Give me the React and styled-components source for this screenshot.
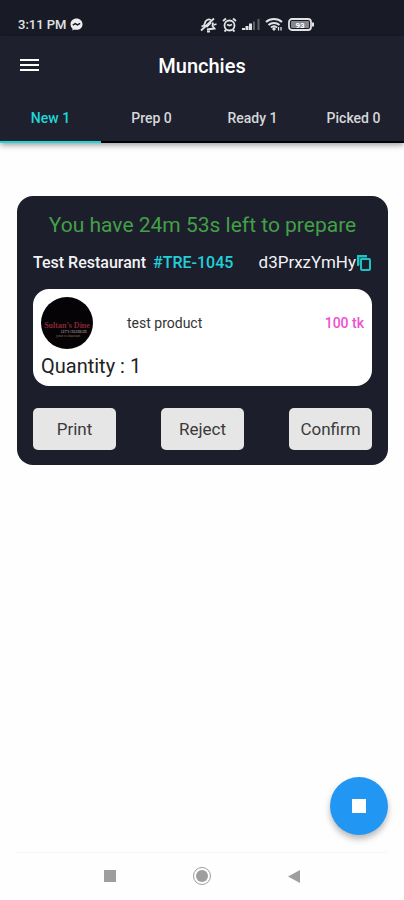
import React from 'react';
import styled, { createGlobalStyle } from 'styled-components';

const GlobalStyle = createGlobalStyle`
  * {
    box-sizing: border-box;
  }

  body {
    margin: 0;
    background: #fefefe;
    font-family: Roboto, "Liberation Sans", sans-serif;
  }

  button {
    border: 0;
    padding: 0;
    background: none;
    font-family: inherit;
    cursor: pointer;
  }
`;

const Screen = styled.div`
  display: flex;
  flex-direction: column;
  min-height: 100vh;
`;

const StatusBar = styled.div`
  display: grid;
  grid-template-columns: 1fr 1fr;
  align-items: center;
  height: 36px;
  padding: 13px 24px 0 18px;
  background: #181b25;
  color: #e2e3e6;
`;

const Clock = styled.div`
  display: flex;
  align-items: center;
  gap: 3px;
  font-size: 13px;
  line-height: 20px;
  font-weight: 500;
`;

const StatusIcons = styled.div`
  display: flex;
  align-items: center;
  gap: 5px;
`;

const Header = styled.header`
  background: #1e202d;
  box-shadow: 0 2px 6px rgba(0, 0, 0, 0.4);
`;

const TitleBar = styled.div`
  display: grid;
  grid-template-columns: 24px 1fr 24px;
  align-items: center;
  height: 58px;
  padding: 0 18px;
`;

const MenuButton = styled.button`
  display: flex;
  align-items: center;
  height: 40px;
  color: #fff;
`;

const Title = styled.h1`
  margin: 0;
  padding-top: 2px;
  text-align: center;
  color: #fff;
  font-size: 20px;
  line-height: 28px;
  font-weight: 500;
`;

const Tabs = styled.nav`
  display: grid;
  grid-template-columns: repeat(4, 1fr);
  box-shadow: inset 0 -2px 0 #020306;
`;

const Tab = styled.button`
  height: 49px;
  border-bottom: 2px solid ${props => props.$active ? '#20d5d5' : 'transparent'};
  color: ${props => props.$active ? '#20d5d5' : '#d6d7db'};
  font-size: 14px;
  line-height: 20px;
  font-weight: 500;
`;

const Content = styled.main`
  flex: 1;
  padding: 53px 16px 16px 17px;
`;

const Order = styled.section`
  padding: 16px 16px 15px;
  border-radius: 16px;
  background: #1c1e2c;
`;

const TimeLeft = styled.p`
  margin: 0;
  text-align: center;
  color: #43a047;
  font-size: 21px;
  line-height: 26px;
`;

const OrderInfo = styled.div`
  display: flex;
  justify-content: space-between;
  align-items: center;
  margin: 13px 0 15px;
  color: #f2f2f4;
  font-size: 16px;
  line-height: 23px;
`;

const Restaurant = styled.div`
  display: flex;
  gap: 7px;
  font-weight: 500;
`;

const OrderNumber = styled.span`
  color: #22d0d8;
`;

const OrderCode = styled.div`
  display: flex;
  align-items: center;
  font-size: 17px;
`;

const CopyButton = styled.button`
  display: flex;
  color: #1cc5c5;
`;

const Product = styled.div`
  padding: 8px;
  border-radius: 16px;
  background: #fff;
`;

const ProductRow = styled.div`
  display: flex;
  align-items: center;
  gap: 34px;
  color: #333;
  font-size: 14px;
  line-height: 20px;
`;

const Price = styled.span`
  margin-left: auto;
  color: #ee50cf;
  font-weight: 500;
`;

const Quantity = styled.p`
  margin: 5px 0 0;
  color: #222;
  font-size: 20px;
  line-height: 24px;
`;

const Actions = styled.div`
  display: flex;
  justify-content: space-between;
  margin-top: 22px;
`;

const Action = styled.button`
  width: 83px;
  height: 42px;
  border-radius: 5px;
  background: #e6e6e6;
  color: #3a3a3a;
  font-size: 17px;
  line-height: 24px;
`;

const StopButton = styled.button`
  position: fixed;
  right: 16px;
  bottom: 65px;
  display: flex;
  align-items: center;
  justify-content: center;
  width: 58px;
  height: 58px;
  border-radius: 50%;
  background: #2196f3;
  box-shadow: 0 4px 6px rgba(0, 0, 0, 0.28);
`;

const SystemNav = styled.nav`
  display: flex;
  justify-content: center;
  align-items: center;
  gap: 72px;
  height: 48px;
  margin: 0 16px;
  padding-bottom: 2px;
  border-top: 1px solid #f7f7f7;
`;

const NavButton = styled.button`
  display: flex;
  color: #9e9e9e;
`;

const TABS = ['New 1', 'Prep 0', 'Ready 1', 'Picked 0'];
const ACTIONS = ['Print', 'Reject', 'Confirm'];

const MessengerIcon = () => (
  <svg width="13" height="13" viewBox="0 0 13 13">
    <path d="M6.5.5C3 .5.5 3 .5 6.2c0 1.8.8 3.3 2 4.3v2l1.8-1c.7.2 1.4.3 2.2.3 3.5 0 6-2.5 6-5.6S10 .5 6.5.5z" fill="#eee" />
    <path d="M2.8 7.2L5.3 5.6l2.1 1.2 2.8-1.400" fill="none" stroke="#181b25" strokeWidth="1.5" />
  </svg>
);

const MutedIcon = () => (
  <svg width="18" height="16" viewBox="0 0 18 16" fill="none" stroke="currentColor" strokeWidth="1.8">
    <path d="M2.500 9.500L5 8.500 6.500 4.500C8 2.200 10 2 12 3M14 5.500l-.5 3.500 2 2.500L8 12.500" />
    <path d="M2 13.500L15 1.500M8 14.500h3M5 8.500l3 1 4-4" />
    <path d="M14.500 8l3-1" strokeWidth="1.500" />
  </svg>
);

const AlarmIcon = () => (
  <svg width="15" height="16" viewBox="0 0 15 16" fill="none" stroke="currentColor" strokeWidth="1.8">
    <circle cx="7.500" cy="8.500" r="5" />
    <path d="M1 4L4 1.500M14 4l-3-2.500M5 7.500l2.500 1L10 7.500M4 13l-1.500 1.500M11 13l1.500 1.500" />
  </svg>
);

const SignalIcon = () => (
  <svg width="18" height="13" viewBox="0 0 18 13" fill="currentColor">
    <path d="M0 10h3v2H0zM3.500 8H6.500v4H3.500zM7 5.500h3V12H7z" />
    <path d="M11 3.500h2V12h-2zM15.500 1h2v11h-2z" opacity="0.35" />
  </svg>
);

const WifiIcon = () => (
  <svg width="18" height="15" viewBox="0 0 18 15" fill="none" stroke="currentColor" strokeWidth="2">
    <path d="M1 5c4.500-4 11.500-4 16 0M3.500 8c3.200-2.800 7.800-2.800 11 0M6 10.500c1.800-1.500 4.200-1.500 6 0" />
    <path d="M9 10l2 2-2 2-2-2z" fill="currentColor" stroke="none" />
    <path d="M13.500 10v3.500M16 10v3.500" strokeWidth="1.300" />
  </svg>
);

const BatteryIcon = () => (
  <svg width="27" height="13" viewBox="0 0 27 13">
    <rect x="1" y="1" width="22" height="11" rx="3" fill="none" stroke="currentColor" strokeWidth="1.800" />
    <path d="M24 4.500h2v4h-2z" fill="currentColor" />
    <rect x="3" y="3" width="18" height="7" rx="1" fill="#85878e" />
    <text x="12" y="9.500" textAnchor="middle" fontSize="8" fontWeight="700" fill="#fff">93</text>
  </svg>
);

const MenuIcon = () => (
  <svg width="24" height="16" viewBox="0 0 24 16">
    <path d="M2 3h19M2 8h19M2 13h19" stroke="currentColor" strokeWidth="2" />
  </svg>
);

const CopyIcon = () => (
  <svg width="16" height="20" viewBox="0 0 16 20" fill="none" stroke="currentColor" strokeWidth="2">
    <path d="M2 13V3h9" />
    <path d="M3 4h8v2H5v6H3z" fill="currentColor" stroke="none" opacity="0.5" />
    <rect x="5" y="6" width="9" height="11" rx="1" />
  </svg>
);

const RestaurantLogo = () => (
  <svg width="52" height="52" viewBox="0 0 52 52" role="img" aria-label="Sultan's Dine">
    <circle cx="26" cy="26" r="26" fill="#050305" />
    <g textAnchor="middle" fontFamily="Liberation Serif, serif">
      <text x="26" y="31" fontSize="8" fontWeight="700" fill="#8b2638">Sultan’s Dine</text>
      <text x="33" y="36" fontSize="3" fill="#c9bdbd">LET’S CELEBRATE</text>
      <text x="27" y="40" fontSize="4" fill="#8c6a58">your restaurant</text>
    </g>
  </svg>
);

export default function App() {
  const [active, setActive] = React.useState(0);

  return (
    <Screen>
      <GlobalStyle />
      <StatusBar>
        <Clock>3:11 PM <MessengerIcon /></Clock>
        <StatusIcons>
          <MutedIcon />
          <AlarmIcon />
          <SignalIcon />
          <WifiIcon />
          <BatteryIcon />
        </StatusIcons>
      </StatusBar>
      <Header>
        <TitleBar>
          <MenuButton aria-label="Menu"><MenuIcon /></MenuButton>
          <Title>Munchies</Title>
        </TitleBar>
        <Tabs>
          {TABS.map((label, i) => (
            <Tab key={label} $active={i === active} onClick={() => setActive(i)}>{label}</Tab>
          ))}
        </Tabs>
      </Header>
      <Content>
        <Order>
          <TimeLeft>You have 24m 53s left to prepare</TimeLeft>
          <OrderInfo>
            <Restaurant>Test Restaurant <OrderNumber>#TRE-1045</OrderNumber></Restaurant>
            <OrderCode>
              d3PrxzYmHy
              <CopyButton aria-label="Copy code"><CopyIcon /></CopyButton>
            </OrderCode>
          </OrderInfo>
          <Product>
            <ProductRow>
              <RestaurantLogo />
              <span>test product</span>
              <Price>100 tk</Price>
            </ProductRow>
            <Quantity>Quantity : 1</Quantity>
          </Product>
          <Actions>
            {ACTIONS.map(label => <Action key={label}>{label}</Action>)}
          </Actions>
        </Order>
      </Content>
      <StopButton aria-label="Stop">
        <svg width="14" height="14"><rect width="14" height="14" fill="#fff" /></svg>
      </StopButton>
      <SystemNav>
        <NavButton aria-label="Recent apps">
          <svg width="20" height="20"><path d="M4 4h12v12H4z" fill="currentColor" /></svg>
        </NavButton>
        <NavButton aria-label="Home">
          <svg width="20" height="20">
            <circle cx="10" cy="10" r="6" fill="currentColor" />
            <circle cx="10" cy="10" r="8.500" fill="none" stroke="currentColor" />
          </svg>
        </NavButton>
        <NavButton aria-label="Back">
          <svg width="20" height="20"><path d="M16 4v13L4 10.500z" fill="currentColor" /></svg>
        </NavButton>
      </SystemNav>
    </Screen>
  );
}
